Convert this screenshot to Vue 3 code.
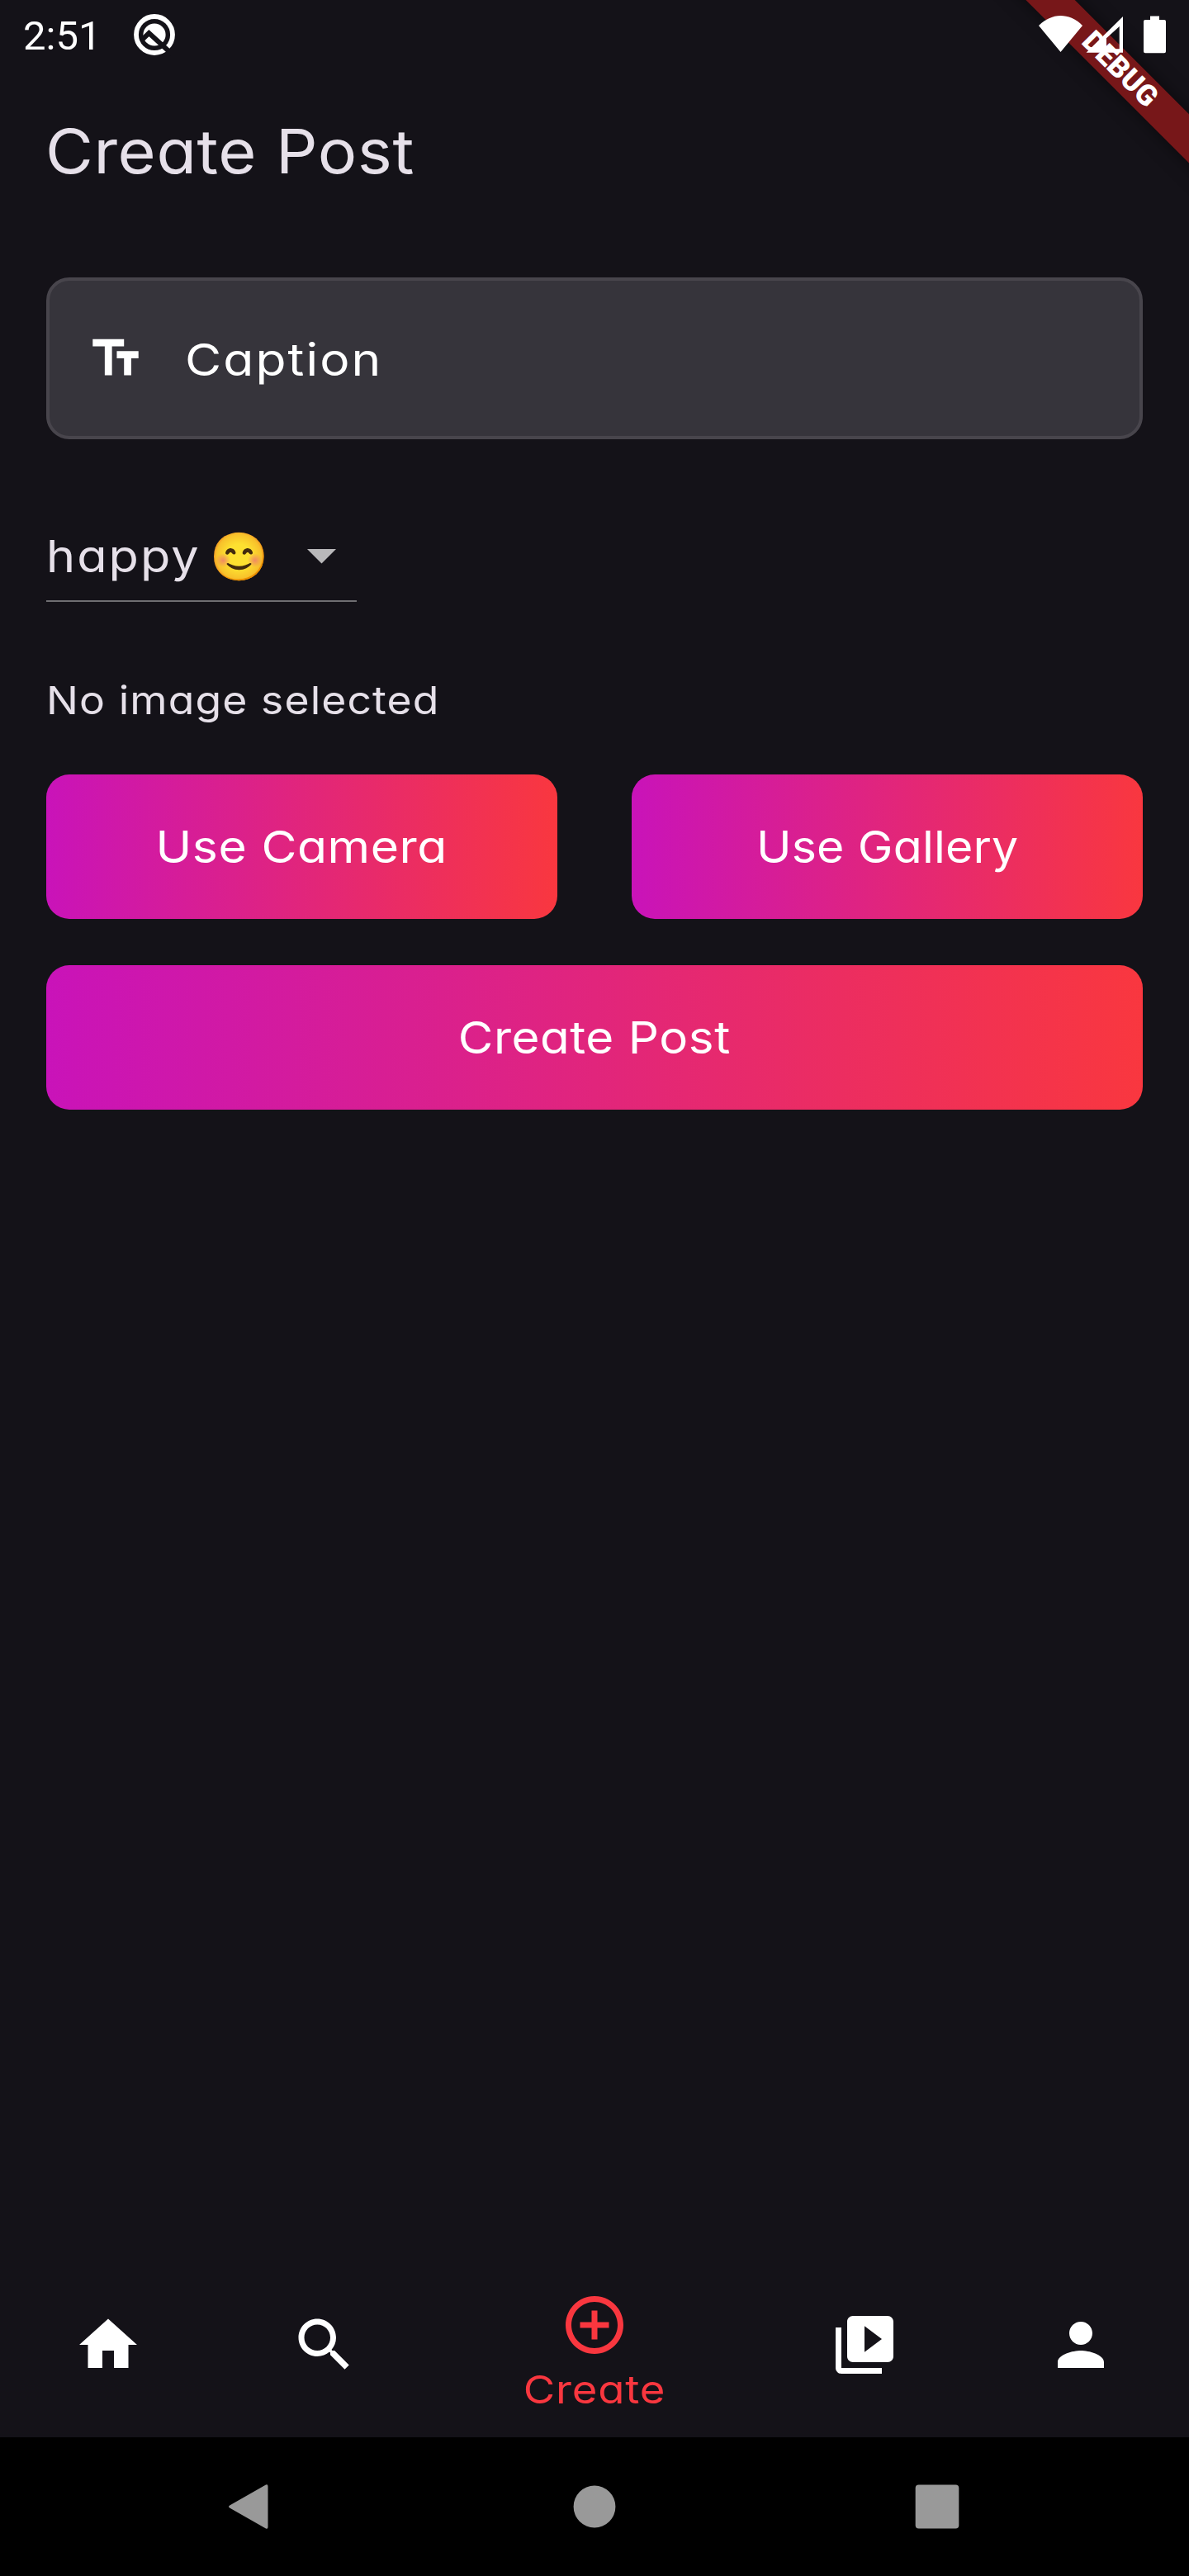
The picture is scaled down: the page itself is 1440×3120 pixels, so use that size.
<script setup>
const tabs = [
  { name: 'Home', path: 'M10 20v-6h4v6h5v-8h3L12 3 2 12h3v8z' },
  { name: 'Search', path: 'M15.5 14h-.79l-.28-.27C15.41 12.59 16 11.11 16 9.5 16 5.91 13.09 3 9.5 3S3 5.91 3 9.5 5.91 16 9.5 16c1.61 0 3.09-.59 4.23-1.57l.27.28v.79l5 4.99L20.49 19l-4.99-5zm-6 0C7.01 14 5 11.99 5 9.5S7.01 5 9.5 5 14 7.01 14 9.5 11.99 14 9.5 14z' },
  { name: 'Create', active: true, path: 'M13 7h-2v4H7v2h4v4h2v-4h4v-2h-4V7zm-1-5C6.48 2 2 6.48 2 12s4.48 10 10 10 10-4.48 10-10S17.52 2 12 2zm0 18c-4.41 0-8-3.59-8-8s3.59-8 8-8 8 3.59 8 8-3.59 8-8 8z' },
  { name: 'Videos', path: 'M4 6H2v14c0 1.1.9 2 2 2h14v-2H4V6zm16-4H8c-1.1 0-2 .9-2 2v12c0 1.1.9 2 2 2h12c1.1 0 2-.9 2-2V4c0-1.1-.9-2-2-2zm-8 12.5v-9l6 4.5-6 4.5z' },
  { name: 'Profile', path: 'M12 12c2.21 0 4-1.79 4-4s-1.79-4-4-4-4 1.79-4 4 1.79 4 4 4zm0 2c-2.67 0-8 1.34-8 4v2h16v-2c0-2.66-5.33-4-8-4z' },
]
</script>

<template>
  <div class="screen">
    <div class="banner-clip"><div class="banner">DEBUG</div></div>

    <header class="status">
      <div class="status-left">
        <span class="time">2:51</span>
        <svg class="q-icon" viewBox="-26 -26 52 52" width="52" height="52">
          <circle r="22" fill="none" stroke="#fff" stroke-width="5.8" />
          <circle r="13.6" fill="#fff" />
          <path d="M-16 7.2 L-6.6 -1.9 L21 23.2" fill="none" stroke="#141218" stroke-width="5.9" />
        </svg>
      </div>
      <svg class="signals" viewBox="0 0 156 48" width="156" height="48">
        <path d="M26.500 45L0 13C9 4.500 18 1 26.500 1S45 4.500 53 13z" fill="#fff" />
        <path fill-rule="evenodd" d="M57.500 45.700L102 2v43.700zM82 28.300V41.300h15.700V14z" fill="#fff" />
        <path d="M135 1.500h11V6h6q2 0 2 2v36.300q0 2-2 2h-23q-2 0-2-2V8q0-2 2-2h6z" fill="#fff" />
      </svg>
    </header>

    <main class="content">
      <h1 class="title"><span class="wide">Create Post</span></h1>

      <div class="field">
        <svg viewBox="0 0 24 24" width="70" height="70"><path d="M2.500 4v3h5v12h3V7h5V4h-13zm19 5h-9v3h3v7h3v-7h3V9z" fill="#fff" /></svg>
        <span class="wide caption">Caption</span>
      </div>

      <div class="mood">
        <span class="wide mood-name">happy</span>
        <span class="emoji">😊</span>
        <svg class="arrow" viewBox="0 0 35 18" width="35" height="18"><path d="M0 0h35L17.500 17.500z" fill="#b9b8ba" /></svg>
      </div>

      <p class="hint"><span class="wide">No image selected</span></p>

      <div class="row">
        <button class="btn"><span class="wide camera">Use Camera</span></button>
        <button class="btn"><span class="wide gallery">Use Gallery</span></button>
      </div>
      <button class="btn full"><span class="wide create">Create Post</span></button>
    </main>

    <nav class="tabs">
      <div v-for="tab in tabs" :key="tab.name" class="tab" :class="{ active: tab.active }">
        <svg viewBox="0 0 24 24" width="84" height="84"><path :d="tab.path" fill="currentColor" /></svg>
        <span v-if="tab.active" class="wide tab-label">{{ tab.name }}</span>
      </div>
    </nav>

    <footer class="system">
      <svg viewBox="0 0 50 58" width="50" height="58"><path d="M46 2.500L3 27q-4 2 0 4L46 55.500q2.500 1 2.500-2V4.500q0-3-2.500-2z" fill="#999" /></svg>
      <svg class="home-dot" viewBox="0 0 52 52" width="52" height="52"><circle cx="26" cy="26" r="25.400" fill="#999" /></svg>
      <svg viewBox="0 0 54 54" width="54" height="54"><rect x=".7" y=".4" width="52.600" height="53.200" rx="4" fill="#999" /></svg>
    </footer>
  </div>
</template>

<style>
body { background: #141218; }
</style>

<style scoped>
.screen {
  position: relative;
  display: flex;
  flex-direction: column;
  width: 1440px;
  height: 3120px;
  overflow: hidden;
  background: #141218;
  color: #e6e0e9;
  font-family: Inter, "Liberation Sans", sans-serif;
  font-feature-settings: "cv11";
}
svg { display: block; flex: none; }
.wide {
  display: inline-block;
  transform: scaleX(var(--stretch, 1.1));
  transform-origin: left center;
  white-space: nowrap;
}

.banner-clip {
  position: absolute;
  top: 0;
  right: 0;
  width: 320px;
  height: 320px;
  overflow: hidden;
}
.banner {
  position: absolute;
  left: -14px;
  top: 62.8px;
  width: 500px;
  height: 42.4px;
  transform: rotate(45deg);
  background: #771719;
  box-shadow: 0 0 21px rgba(0, 0, 0, 0.5);
  color: #fff;
  font: 900 35.2px/41px Roboto, sans-serif;
  text-align: center;
}

.status {
  position: relative;
  display: flex;
  justify-content: space-between;
  height: 84px;
  padding: 0 26px 0 28px;
  color: #fff;
}
.status-left { display: flex; align-items: center; gap: 38px; }
.time { width: 95px; padding-top: 4px; font: 400 49px/84px Roboto, sans-serif; }
.signals { margin-top: 18px; }

.content { flex: 1; padding: 57px 56px 0; }
.title {
  --stretch: 1.07;
  margin: 0;
  font-size: 74px;
  line-height: 84px;
  font-weight: 400;
  letter-spacing: 0.6px;
}
.title .wide { margin-left: -1px; }
.field {
  box-sizing: border-box;
  display: flex;
  align-items: center;
  gap: 49px;
  height: 196px;
  margin-top: 111px;
  padding-left: 45px;
  border: 4px solid #48454c;
  border-radius: 28px;
  background: #36343b;
  color: #fff;
}
.caption { --stretch: 1.12; font-size: 54px; letter-spacing: 1.87px; padding-top: 2px; }
.mood {
  box-sizing: border-box;
  display: flex;
  align-items: center;
  width: 376px;
  height: 110px;
  margin-top: 87px;
  border-bottom: 2px solid #6f6e71;
}
.mood-name { width: 198px; font-size: 54px; letter-spacing: 1.87px; }
.emoji {
  width: 72px;
  margin-top: 4px;
  font-size: 57px;
  line-height: 70px;
  font-family: "Noto Color Emoji", sans-serif;
  white-space: nowrap;
}
.arrow { margin-left: 46px; margin-top: 2px; }
.hint { margin: 77px 0 0; font-size: 47px; line-height: 84px; letter-spacing: 0.98px; }
.row { display: flex; gap: 90px; margin-top: 48px; }
.btn {
  display: flex;
  flex: 1;
  align-items: center;
  justify-content: center;
  height: 175px;
  padding: 0;
  border: 0;
  border-radius: 28px;
  background: linear-gradient(90deg, #c913b9, #f9373f);
  color: #fff;
  font: inherit;
  font-size: 54px;
  font-feature-settings: "cv11";
}
.btn .wide { transform-origin: center; }
.full { width: 100%; margin-top: 56px; }
.camera { --stretch: 1.09; letter-spacing: 0.52px; }
.gallery { --stretch: 1.06; letter-spacing: 0.13px; }
.create { --stretch: 1.08; letter-spacing: 0.51px; }

.tabs { display: flex; height: 210px; color: #fff; }
.tab {
  display: flex;
  flex: 1;
  flex-direction: column;
  align-items: center;
  padding-top: 56px;
}
.tab.active { flex: 1.5; padding-top: 32px; color: #f9373f; }
.tab-label {
  --stretch: 1.12;
  margin-top: 6px;
  font-size: 47px;
  line-height: 60px;
  letter-spacing: 0.72px;
  transform-origin: center;
}

.system {
  display: flex;
  align-items: center;
  justify-content: space-between;
  box-sizing: border-box;
  height: 168px;
  padding: 0 278px 0 276px;
  background: #000;
}
.home-dot { margin-left: 6px; }
</style>
